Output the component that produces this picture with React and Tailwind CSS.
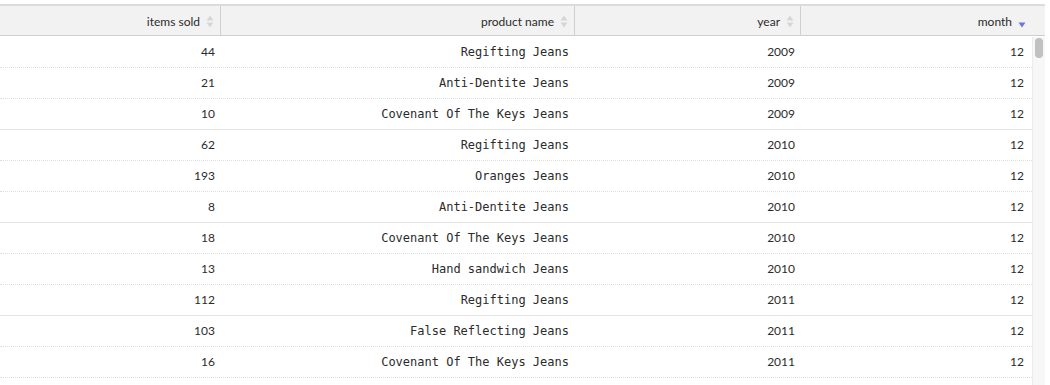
import React from 'react';

const rows = [
  [44, 'Regifting Jeans', 2009, 12],
  [21, 'Anti-Dentite Jeans', 2009, 12],
  [10, 'Covenant Of The Keys Jeans', 2009, 12],
  [62, 'Regifting Jeans', 2010, 12],
  [193, 'Oranges Jeans', 2010, 12],
  [8, 'Anti-Dentite Jeans', 2010, 12],
  [18, 'Covenant Of The Keys Jeans', 2010, 12],
  [13, 'Hand sandwich Jeans', 2010, 12],
  [112, 'Regifting Jeans', 2011, 12],
  [103, 'False Reflecting Jeans', 2011, 12],
  [16, 'Covenant Of The Keys Jeans', 2011, 12],
];

const cols = [
  { label: 'items sold', w: 'w-[221px]' },
  { label: 'product name', w: 'w-[354px]' },
  { label: 'year', w: 'w-[226px]' },
  { label: 'month', w: 'w-[231px]', active: true },
];

function SortIcon({ active }) {
  if (active) {
    return (
      <svg width="8" height="13" viewBox="0 0 8 13" className="shrink-0">
        <path d="M0.5 7.5 L7.5 7.5 L4 12.5 Z" fill="#7373d9" />
      </svg>
    );
  }
  return (
    <svg width="8" height="13" viewBox="0 0 8 13" className="shrink-0">
      <path d="M4 0.5 L7.5 5.5 L0.5 5.5 Z" fill="#d6d6d6" />
      <path d="M0.5 7.5 L7.5 7.5 L4 12.5 Z" fill="#d6d6d6" />
    </svg>
  );
}

export default function App() {
  return (
    <div className="w-[1050px] h-[385px] bg-white overflow-hidden pt-[4px] font-['Lato','Liberation_Sans',sans-serif] text-[#2b2b2b]">
      <div className="w-[1045px] border-t-2 border-[#dcdcdc]">
        {/* Header */}
        <div className="flex h-[30px] bg-[#f2f2f2] border-b border-[#cfcfcf]">
          {cols.map((c, i) => (
            <div
              key={c.label}
              className={`${c.w} flex items-center justify-end gap-[6px] pr-[6px] pt-[2px] text-[12px] ${
                i < 3 ? 'border-r border-[#d0d0d0]' : ''
              }`}
            >
              <span>{c.label}</span>
              <SortIcon active={c.active} />
            </div>
          ))}
          <div className="flex-1" />
        </div>

        {/* Body */}
        <div className="flex mt-[1px]">
          <div className="w-[1032px]">
            {rows.map((r, idx) => (
              <div
                key={idx}
                className={`flex h-[31px] items-center text-[12px] border-b ${
                  idx % 3 === 2 ? 'border-solid border-[#e3e3e3]' : 'border-dotted border-[#dedede]'
                }`}
              >
                <div className="w-[221px] text-right pr-[6px]">{r[0]}</div>
                <div className="w-[354px] text-right pr-[6px] font-['DejaVu_Sans_Mono',monospace] text-[12px]">
                  {r[1]}
                </div>
                <div className="w-[226px] text-right pr-[6px]">{r[2]}</div>
                <div className="w-[231px] text-right pr-[8px]">{r[3]}</div>
              </div>
            ))}
          </div>
          <div className="w-[13px] h-[350px] bg-[#f7f7f7] border-l border-[#ececec] pt-[1px] flex justify-center">
            <div className="w-[8px] h-[20px] rounded-[4px] bg-[#c1c1c1]" />
          </div>
        </div>
      </div>
    </div>
  );
}
